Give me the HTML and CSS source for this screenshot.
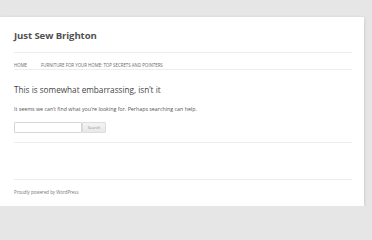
FILE: index.html
```html
<!DOCTYPE html>
<html lang="en">
<head>
    <meta charset="UTF-8">
    <meta name="viewport" content="width=device-width, initial-scale=1.0">
    <title>Page not found | Just Sew Brighton</title>
    <link rel="stylesheet" href="styles.css">
</head>
<body>
    <div class="site">
        <header class="site-header">
            <h1 class="site-title"><a href="#">Just Sew Brighton</a></h1>
            <nav class="main-navigation">
                <ul class="nav-menu">
                    <li><a href="#">Home</a></li>
                    <li><a href="#">Furniture For Your Home: Top Secrets And Pointers</a></li>
                </ul>
            </nav>
        </header>

        <main class="site-content">
            <article class="error404">
                <h1 class="entry-title">This is somewhat embarrassing, isn&rsquo;t it</h1>
                <p>It seems we can&rsquo;t find what you&rsquo;re looking for. Perhaps searching can help.</p>
                <form class="search-form">
                    <input type="text" class="search-field">
                    <button type="button" class="search-submit">Search</button>
                </form>
            </article>
        </main>

        <footer class="site-info">
            <a href="#">Proudly powered by WordPress</a>
        </footer>
    </div>
</body>
</html>
```

FILE: styles.css
```css
* {
    box-sizing: border-box;
    margin: 0;
    padding: 0;
}

body {
    background: #e6e6e6;
    font-family: 'Open Sans', 'Liberation Sans', sans-serif;
    color: #444;
}

a {
    text-decoration: none;
}

.site {
    width: 364px;
    margin-top: 17px;
    padding: 0 12px 0 14px;
    background: #fff;
    box-shadow: 0 1px 3px rgba(100, 100, 100, 0.3);
}

.site-header {
    padding-top: 12px;
}

.site-title {
    font-size: 9.6px;
    font-weight: bold;
    letter-spacing: -0.1px;
    line-height: 14px;
    height: 23px;
}

.site-title a {
    color: #515151;
}

.main-navigation {
    border-top: 1px solid #ededed;
    border-bottom: 1px solid #ededed;
    height: 18px;
}

.nav-menu {
    list-style: none;
    display: flex;
    gap: 14px;
    line-height: 16px;
}

.nav-menu a {
    font-size: 4.4px;
    text-transform: uppercase;
    color: #6a6a6a;
}

.site-content {
    padding-top: 13px;
}

.error404 {
    border-bottom: 1px solid #ededed;
    padding-bottom: 9px;
}

.entry-title {
    font-size: 8.2px;
    font-weight: normal;
    line-height: 14px;
    color: #444;
}

.error404 p {
    font-size: 5.3px;
    line-height: 9px;
    margin-top: 8px;
    color: #555;
}

.search-form {
    display: flex;
    margin-top: 8px;
}

.search-field {
    width: 68px;
    height: 11px;
    border: 1px solid #d6d6d6;
    border-radius: 1px;
    background: #fff;
}

.search-submit {
    width: 24px;
    height: 11px;
    border: 1px solid #dcdcdc;
    border-radius: 1px;
    background: linear-gradient(#f4f4f4, #e8e8e8);
    font-family: 'Open Sans', 'Liberation Sans', sans-serif;
    font-size: 4px;
    color: #8c8c8c;
}

.site-info {
    margin-top: 36px;
    border-top: 1px solid #ededed;
    padding: 9px 0 11px;
    font-size: 4.4px;
    line-height: 6px;
}

.site-info a {
    color: #757575;
}
```
